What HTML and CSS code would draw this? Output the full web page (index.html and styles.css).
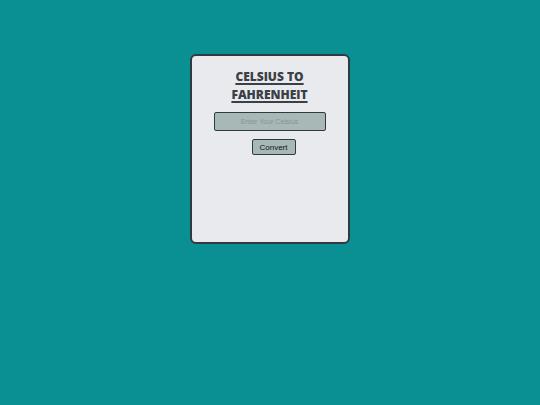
FILE: index.html
```html
<!DOCTYPE html>
<html>
<head>
<meta charset="utf-8">
<link rel="stylesheet" href="styles.css">
</head>
<body>
<div class="card">
  <h1 class="title">CELSIUS TO FAHRENHEIT</h1>
  <input class="field" type="text" placeholder="Enter Your Celsius">
  <button class="btn">Convert</button>
</div>
</body>
</html>
```
FILE: styles.css
```css
html, body {
  margin: 0;
  padding: 0;
}
body {
  background: #0a8f93;
  width: 540px;
  height: 405px;
  display: flex;
  flex-direction: column;
  align-items: center;
  font-family: "Liberation Sans", Arial, sans-serif;
}
.card {
  box-sizing: border-box;
  margin-top: 54px;
  margin-left: -1px;
  width: 160px;
  height: 190px;
  background: #e9eaee;
  border: 2px solid #2f3b3f;
  border-radius: 6px;
  display: flex;
  flex-direction: column;
  align-items: center;
  padding-top: 12px;
}
.title {
  margin: 0;
  width: 90px;
  text-align: center;
  font-family: "Open Sans", sans-serif;
  font-weight: 800;
  font-size: 12px;
  line-height: 18px;
  color: #3a4045;
  text-decoration: underline;
  text-decoration-thickness: 1.5px;
  text-underline-offset: 2px;
}
.field {
  box-sizing: border-box;
  margin-top: 8px;
  width: 112px;
  height: 19px;
  background: #a8b8b7;
  border: 1.5px solid #2f3b3f;
  border-radius: 2px;
  text-align: center;
  font-family: "Liberation Sans", Arial, sans-serif;
  font-size: 7px;
  padding: 0;
  outline: none;
}
.field::placeholder {
  color: #869495;
}
.btn {
  box-sizing: border-box;
  margin-top: 8px;
  margin-left: 8px;
  width: 44px;
  height: 16px;
  background: #a8b8b7;
  border: 1px solid #2f3b3f;
  border-radius: 2px;
  font-family: "Liberation Sans", Arial, sans-serif;
  font-size: 8px;
  color: #111;
  padding: 0;
}
```
